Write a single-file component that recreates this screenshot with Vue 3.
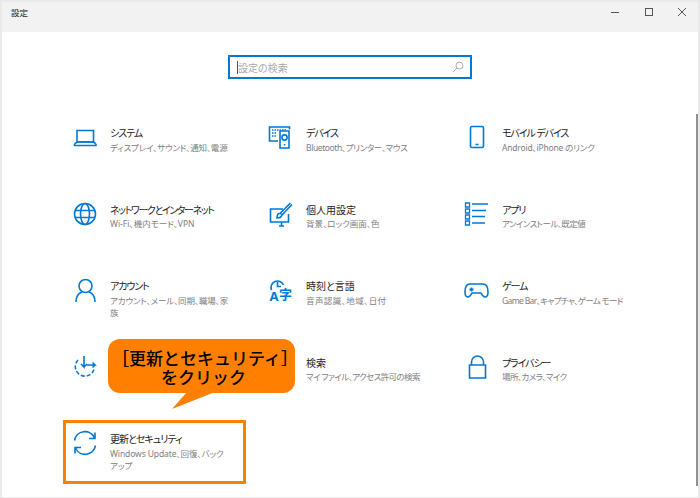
<script setup>
const items = [
  { id: 'system', title: 'システム', desc: 'ディスプレイ、サウンド、通知、電源', ts: -1.1, ds: -0.18 },
  { id: 'devices', title: 'デバイス', desc: 'Bluetooth、プリンター、マウス', ts: -1.1, ds: -0.4 },
  { id: 'phone', title: 'モバイル デバイス', desc: 'Android、iPhone のリンク', ts: -1.1, ds: -0.2 },
  { id: 'network', title: 'ネットワークとインターネット', desc: 'Wi-Fi、機内モード、VPN', ts: -1.4, ds: 0 },
  { id: 'personal', title: '個人用設定', desc: '背景、ロック画面、色', ts: 0, ds: 0 },
  { id: 'apps', title: 'アプリ', desc: 'アンインストール、既定値', ts: -1.1, ds: -0.6 },
  { id: 'account', title: 'アカウント', desc: 'アカウント、メール、同期、職場、家\n族', ts: -1.1, ds: -0.15 },
  { id: 'time', title: '時刻と言語', desc: '音声認識、地域、日付', ts: 0, ds: 0.4 },
  { id: 'game', title: 'ゲーム', desc: 'Game Bar、キャプチャ、ゲーム モード', ts: -1.1, ds: -0.65 },
  { id: 'ease', title: '', desc: '', ts: 0, ds: 0 },
  { id: 'search', title: '検索', desc: 'マイ ファイル、アクセス許可の検索', ts: 0, ds: -0.6 },
  { id: 'privacy', title: 'プライバシー', desc: '場所、カメラ、マイク', ts: -1.1, ds: -0.6 },
  { id: 'update', title: '更新とセキュリティ', desc: 'Windows Update、回復、バック\nアップ', ts: -1, ds: -0.1 },
]
</script>

<template>
  <div class="window">
    <header class="titlebar">
      <span class="app-name">設定</span>
      <div class="controls">
        <svg width="10" height="10" viewBox="0 0 10 10"><path d="M0 5.500h8" stroke="#555" fill="none"/></svg>
        <svg width="10" height="10" viewBox="0 0 10 10"><rect x="1.500" y="1.500" width="7" height="7" stroke="#555" fill="none"/></svg>
        <svg width="10" height="10" viewBox="0 0 10 10"><path d="M1 1l8 8M9 1l-8 8" stroke="#555" fill="none"/></svg>
      </div>
    </header>
    <main class="content">
      <div class="search">
        <span class="caret"></span>
        <span class="placeholder">設定の検索</span>
        <svg class="lens" width="12" height="12" viewBox="0 0 12 12"><circle cx="7.500" cy="4.500" r="3.500" stroke="#aaa" fill="none"/><path d="M5 7l-4 4" stroke="#aaa" fill="none"/></svg>
      </div>
      <div class="grid">
        <div v-for="item in items" :key="item.id" class="item">
          <svg class="icon" width="26" height="26" viewBox="0 0 26 26" fill="none" stroke="#0078d7" stroke-width="1.6">
            <template v-if="item.id === 'system'">
              <path d="M5 6.500h16.500v11.500h-16.500z"/><path d="M2 21.500h22.500M2 21.500q0-1.500 3-3.500h16.500q3 2 3 3.500"/>
            </template>
            <template v-else-if="item.id === 'devices'">
              <path d="M10 17H1.500V3h20v2.500"/>
              <path d="M4 6h15M4 9h5M4 12h5" stroke-dasharray="1.500 1"/>
              <path d="M12 7h9v17h-9z"/><circle cx="16.500" cy="13.500" r="2.600"/><path d="M16.500 20v1.500"/>
            </template>
            <template v-else-if="item.id === 'phone'">
              <rect x="6.500" y="2.500" width="13" height="21" rx="1.500"/><path d="M11.500 20.500h3"/>
            </template>
            <template v-else-if="item.id === 'network'">
              <circle cx="13" cy="13" r="10.500"/><ellipse cx="13" cy="13" rx="4.500" ry="10.500"/><path d="M3 9.500h20M3 16.500h20"/>
            </template>
            <template v-else-if="item.id === 'personal'">
              <path d="M15 8H2.500v13h18V13"/><path d="M11 25h5M13.500 21v4"/>
              <path d="M22.500 2 12 12.500M24 3.500 14 14M9 17q0-5 3-4.500t2 1.500q-1 3-5 3z"/>
            </template>
            <template v-else-if="item.id === 'apps'">
              <path d="M1.500 2h4v4h-4zM1.500 8h4v4h-4zM1.500 14h4v4h-4zM1.500 20h4v4h-4z" stroke-width="1.300"/>
              <path d="M8 3h16M8 9.500h14M8 15.500h13M8 22h13"/>
            </template>
            <template v-else-if="item.id === 'account'">
              <circle cx="13.500" cy="9" r="6.500"/><path d="M4 25q0-8 6-10M23 25q0-8-6-10"/>
            </template>
            <template v-else-if="item.id === 'time'">
              <path d="M3.500 13a6.500 6.500 0 1 1 12-5"/><path d="M9.500 5v4.500h3.500"/>
              <text x="1.500" y="24" class="icon-a">A</text><text x="11" y="22" class="icon-ji">字</text>
            </template>
            <template v-else-if="item.id === 'game'">
              <path d="M6 7h13q5 0 5 8 0 5-3 5-2 0-4-4H8q-2 4-4 4-3 0-3-5 0-8 5-8z"/>
              <path d="M5.500 12.500h4M7.500 10.500v4M16.500 11h.1M19.500 13.500h.1" stroke-width="1.800"/>
            </template>
            <template v-else-if="item.id === 'ease'">
              <path d="M6 6a9.500 9.500 0 1 0 16 9" stroke-dasharray="4 2"/><path d="M12 2v11l-3-3M12 13l3-3M15 11h8l-2.500-2.500M23 11l-2.500 2.500"/>
            </template>
            <template v-else-if="item.id === 'privacy'">
              <path d="M7.500 11V8a6 6 0 0 1 12 0V11"/><path d="M5.500 11h16v13h-16z"/>
            </template>
            <template v-else-if="item.id === 'update'">
              <path d="M2.500 10.500a10.500 10.500 0 0 1 20-2.500M23 2.500V8.500H17"/>
              <path d="M23.500 15.500a10.500 10.500 0 0 1-20 2.500M3 23.500V17.500H9"/>
            </template>
          </svg>
          <div v-if="item.title" class="text">
            <div class="title" :style="{ letterSpacing: item.ts + 'px' }">{{ item.title }}</div>
            <div class="desc" :style="{ letterSpacing: item.ds + 'px' }">{{ item.desc }}</div>
          </div>
        </div>
      </div>
      <div class="scrollbar"></div>
    </main>
    <div class="highlight"></div>
    <div class="callout">［更新とセキュリティ］<br>をクリック</div>
    <svg class="tail" width="44" height="18" viewBox="0 0 44 18"><path d="M15 0h28L0 17z" fill="#ff8000"/></svg>
  </div>
</template>

<style scoped>
.window {
  position: relative;
  box-sizing: border-box;
  width: 700px;
  height: 498px;
  overflow: hidden;
  background: #fff;
  border: 2px solid #e9e9e9;
  border-bottom-width: 1px;
  display: flex;
  flex-direction: column;
  font-family: "Noto Sans", "Noto Sans CJK JP", sans-serif;
  font-feature-settings: "palt";
}
.titlebar {
  flex: none;
  height: 30px;
  background: #f2f2f2;
  display: flex;
  align-items: center;
  justify-content: space-between;
  padding: 0 0 10px 9px;
  box-sizing: border-box;
  color: #222;
}
.app-name { font-size: 8.500px; }
.controls { display: flex; gap: 23px; padding-right: 11px; }
.content { position: relative; flex: 1; min-height: 0; display: flex; flex-direction: column; }
.search {
  box-sizing: border-box;
  flex: none;
  align-self: flex-start;
  margin: 23px 0 0 226px;
  width: 244px;
  height: 24px;
  border: 2px solid #0078d7;
  display: flex;
  align-items: center;
  padding: 0 6px 0 7px;
}
.caret { width: 1px; height: 13px; background: #555; flex: none; }
.placeholder { flex: 1; font-size: 10px; color: #a8a8a8; }
.grid {
  flex: none;
  display: grid;
  grid-template-columns: repeat(3, 196px);
  grid-auto-rows: 76.500px;
  margin: 45px 0 0 61px;
}
.item { display: flex; align-items: flex-start; gap: 12px; padding: 0 12px 0 9px; }
.icon { flex: none; overflow: visible; }
.icon-a { font: 700 13px "Noto Sans", sans-serif; fill: #0078d7; stroke: none; }
.icon-ji { font: 700 13px "Noto Sans CJK JP", sans-serif; fill: #0078d7; stroke: none; }
.text { width: 125px; flex: none; padding-top: 2px; }
.title { font-size: 10px; line-height: 14px; color: #222; }
.desc { font-size: 8.500px; line-height: 12px; margin-top: 1.500px; color: #808080; white-space: pre-line; }
.scrollbar { position: absolute; right: 0; top: 82px; bottom: 11px; width: 2px; background: #8f8f8f; }
.highlight {
  position: absolute;
  left: 61px;
  top: 418px;
  width: 183px;
  height: 64px;
  box-sizing: border-box;
  border: 3px solid #ff8000;
}
.callout {
  position: absolute;
  left: 106px;
  top: 337px;
  width: 187px;
  height: 54px;
  border-radius: 12px;
  background: #ff8000;
  color: #000;
  font-size: 17px;
  font-weight: 500;
  line-height: 19px;
  text-align: center;
  padding: 9px 0 0 4px;
  box-sizing: border-box;
  font-feature-settings: normal;
  font-family: "Noto Sans CJK JP", sans-serif;
  white-space: nowrap;
}
.tail { position: absolute; left: 170px; top: 390px; }
</style>
